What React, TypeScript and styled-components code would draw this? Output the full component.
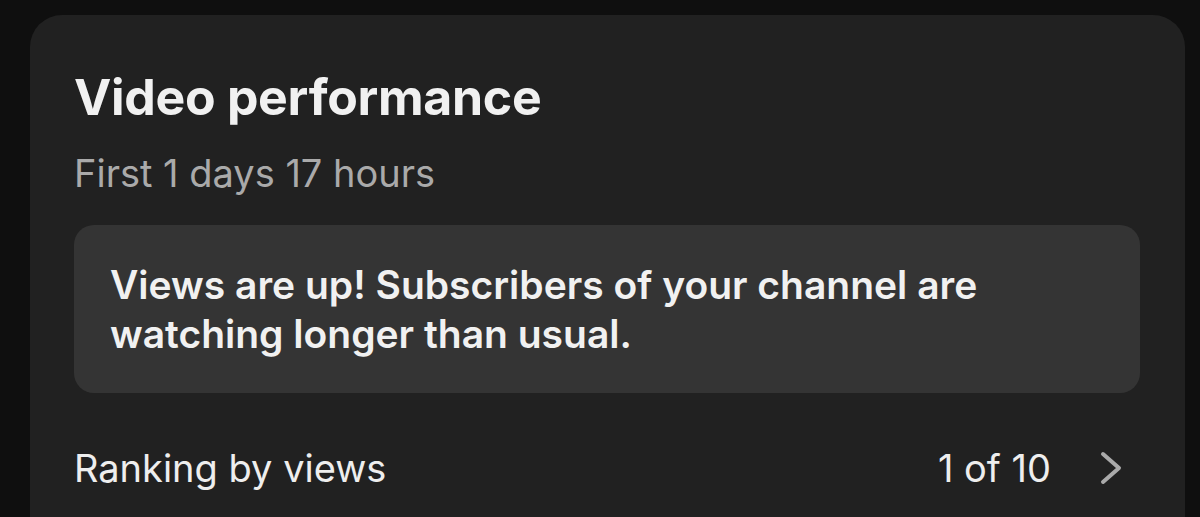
import React from "react";
import styled, { createGlobalStyle } from "styled-components";

const Global = createGlobalStyle`
  html, body {
    margin: 0;
    padding: 0;
    background: #0f0f0f;
    font-family: Inter, "Noto Sans", sans-serif;
    -webkit-font-smoothing: antialiased;
  }
`;

const Page = styled.div`
  width: 1200px;
  height: 517px;
  overflow: hidden;
  padding: 15px 15px 0 30px;
  box-sizing: border-box;
`;

const Card = styled.div`
  background: #212121;
  border-radius: 32px 32px 0 0;
  height: 540px;
  padding: 54px 45px 0 44px;
  box-sizing: border-box;
`;

const Title = styled.h1`
  margin: 0;
  font-size: 50px;
  font-weight: 700;
  color: #f1f1f1;
  line-height: 56px;
  letter-spacing: -0.3px;
`;

const Subtitle = styled.div`
  margin-top: 26px;
  font-size: 38px;
  color: #aaaaaa;
  line-height: 44px;
`;

const Notice = styled.div`
  margin-top: 30px;
  background: #343434;
  border-radius: 20px;
  padding: 35px 36px;
  font-size: 39px;
  font-weight: 600;
  color: #f1f1f1;
  line-height: 49px;
`;

const Row = styled.div`
  display: flex;
  align-items: center;
  justify-content: space-between;
  margin-top: 53px;
  padding-right: 18px;
  font-size: 38px;
  color: #eeeeee;
  line-height: 44px;
`;

const Right = styled.div`
  display: flex;
  align-items: center;
  gap: 49px;
`;

const Chevron = () => (
  <svg width="22" height="34" viewBox="0 0 22 34" fill="none">
    <path d="M3 3 L19 17 L3 31" stroke="#aaaaaa" strokeWidth="4" strokeLinecap="round" strokeLinejoin="round" />
  </svg>
);

export default function App() {
  return (
    <>
      <Global />
      <Page>
        <Card>
          <Title>Video performance</Title>
          <Subtitle>First 1 days 17 hours</Subtitle>
          <Notice>
            Views are up! Subscribers of your channel are watching longer than usual.
          </Notice>
          <Row>
            <span>Ranking by views</span>
            <Right>
              <span>1 of 10</span>
              <Chevron />
            </Right>
          </Row>
        </Card>
      </Page>
    </>
  );
}
